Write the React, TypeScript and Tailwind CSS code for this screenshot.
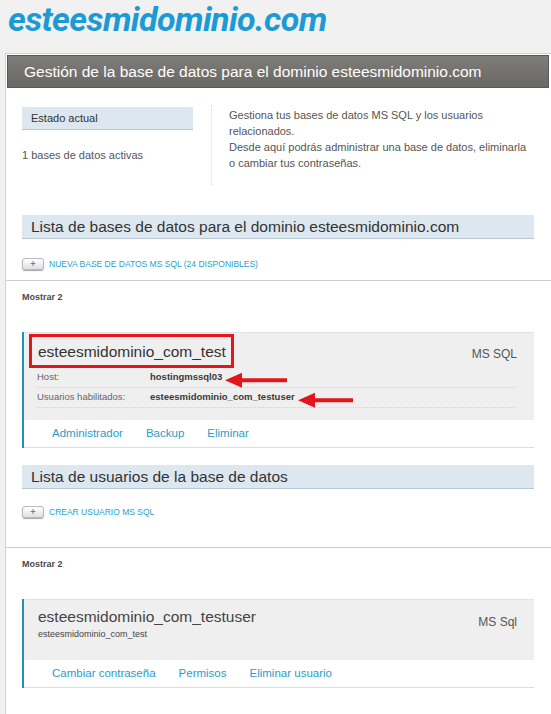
import React from 'react';

function AddButton({ label }: { label: string }) {
  return (
    <div className="flex items-center">
      <span className="flex h-[12px] w-[22px] items-center justify-center rounded-[3px] border border-[#b8b8b8] bg-gradient-to-b from-white to-[#e0e0e0] text-[9px] font-bold leading-none text-[#1f9ad3] shadow-[0_1px_1px_rgba(0,0,0,0.35)]">
        +
      </span>
      <span className="ml-[5px] text-[8.5px] uppercase leading-3 text-[#27a2cf]">{label}</span>
    </div>
  );
}

function Arrow({ w }: { w: number }) {
  return (
    <svg
      className="absolute left-full top-1/2 ml-[3px] -translate-y-[38%]"
      width={w}
      height="18"
      viewBox={`0 0 ${w} 18`}
    >
      <path d={`M0 9 L17 1.5 L17 7 L${w} 7 L${w} 11 L17 11 L17 16.5 Z`} fill="#e3161c" />
    </svg>
  );
}

function Heading({ children }: { children: React.ReactNode }) {
  return (
    <h2 className="flex h-[24px] items-center border-b border-[#b8c8d4] bg-[#dde7ef] pl-[9px] text-[15.5px] text-[#333]">
      {children}
    </h2>
  );
}

function Links({ items }: { items: string[] }) {
  return (
    <div className="flex h-[28px] items-center gap-[23px] border-b border-[#dedede] bg-white pl-7 text-[11.5px] text-[#2a9dca]">
      {items.map((l) => (
        <a key={l} href="#">
          {l}
        </a>
      ))}
    </div>
  );
}

function Row({ label, value, arrow }: { label: string; value: string; arrow: number }) {
  return (
    <div className="flex h-[20px] items-center border-b border-dotted border-[#d2d2d2] text-[9.5px]">
      <span className="w-[113px] text-[#666]">{label}</span>
      <span className="relative font-bold text-[#3a3a3a]">
        {value}
        <Arrow w={arrow} />
      </span>
    </div>
  );
}

export default function App() {
  return (
    <div className="flex min-h-screen flex-col bg-[#f1f1f1] pl-[5px] font-['Liberation_Sans',Arial,sans-serif] text-[#555]">
      <h1 className="h-[53px] pl-[3px] pt-[2px] font-['Roboto',Arial,sans-serif] text-[34px] font-bold italic leading-[34px] tracking-[-0.6px] text-[#1c9ad6]">
        esteesmidominio.com
      </h1>

      <div className="flex-1 border-l border-t border-[#d2d2d2] bg-white pt-[1px]">
        <div className="ml-[1px] mr-[2px] flex h-[33px] items-center border border-[#5c5a57] bg-gradient-to-b from-[#7f7d79] to-[#6a6864] pl-4 text-[15.5px] text-white">
          Gestión de la base de datos para el dominio esteesmidominio.com
        </div>

        <section className="pb-[10px] pl-4 pr-[17px] pt-[17px]">
          <div className="flex h-[80px]">
            <div className="w-[171px] pt-[2px]">
              <div className="flex h-[23px] items-center border-b border-[#b8c8d4] bg-[#dde7ef] pl-[9px] text-[11px] text-[#333]">
                Estado actual
              </div>
              <p className="mt-[17px] text-[11px] leading-4">1 bases de datos activas</p>
            </div>
            <div className="ml-[18px] whitespace-nowrap border-l border-dotted border-[#dcdcdc] pl-[17px] pt-[2px] text-[11px] leading-4">
              <p>
                Gestiona tus bases de datos MS SQL y los usuarios
                <br />
                relacionados.
              </p>
              <p>
                Desde aquí podrás administrar una base de datos, eliminarla
                <br />o cambiar tus contraseñas.
              </p>
            </div>
          </div>
          <div className="mt-[30px]">
            <Heading>Lista de bases de datos para el dominio esteesmidominio.com</Heading>
          </div>
          <div className="mt-[19px]">
            <AddButton label="Nueva base de datos MS SQL (24 disponibles)" />
          </div>
        </section>

        <section className="border-t border-[#cdcdcd] pb-[29px] pl-4 pr-[17px] pt-[10px]">
          <p className="text-[9px] font-bold leading-3 text-[#4a4a4a]">Mostrar 2</p>

          <div className="mt-[29px] border-l-2 border-[#2490b9]">
            <div className="border-t border-[#e2e2e2] bg-[#efefef] pb-[12px] pt-[9px]">
              <div className="flex justify-between pl-[14px] pr-[17px]">
                <span className="relative text-[15.5px] leading-5 text-[#333]">
                  esteesmidominio_com_test
                  <span className="absolute -bottom-[4px] -left-[9px] -right-[8px] -top-[8px] border-[3px] border-[#e3161c]" />
                </span>
                <span className="pt-[2px] text-[12px] leading-5">MS SQL</span>
              </div>
              <div className="ml-[13px] mr-[18px] mt-[4px]">
                <Row label="Host:" value="hostingmssql03" arrow={62} />
                <Row label="Usuarios habilitados:" value="esteesmidominio_com_testuser" arrow={55} />
              </div>
            </div>
            <Links items={['Administrador', 'Backup', 'Eliminar']} />
          </div>

          <div className="mt-[17px]">
            <Heading>Lista de usuarios de la base de datos</Heading>
          </div>
          <div className="mt-[17px]">
            <AddButton label="Crear usuario MS SQL" />
          </div>
        </section>

        <section className="border-t border-[#cdcdcd] pl-4 pr-[17px] pt-[10px]">
          <p className="text-[9px] font-bold leading-3 text-[#4a4a4a]">Mostrar 2</p>

          <div className="mt-[29px] border-l-2 border-[#2490b9]">
            <div className="border-t border-[#e2e2e2] bg-[#efefef] pb-[20px] pt-[7px]">
              <div className="flex justify-between pl-[14px] pr-[17px]">
                <div>
                  <p className="text-[15.5px] leading-5 text-[#444]">esteesmidominio_com_testuser</p>
                  <p className="mt-[1px] text-[9px] leading-3 text-[#444]">esteesmidominio_com_test</p>
                </div>
                <span className="pt-[5px] text-[12px] leading-5">MS Sql</span>
              </div>
            </div>
            <Links items={['Cambiar contraseña', 'Permisos', 'Eliminar usuario']} />
          </div>
        </section>
      </div>
    </div>
  );
}
